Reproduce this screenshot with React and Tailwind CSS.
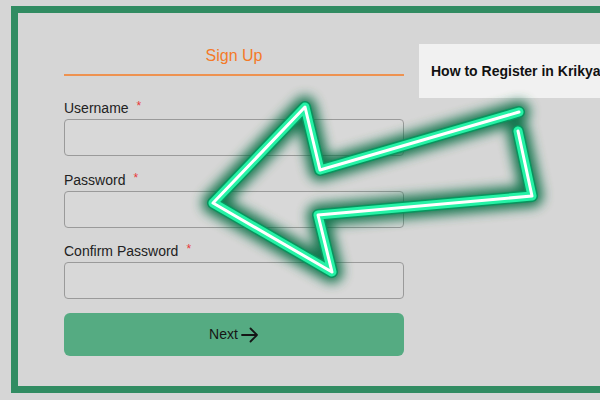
import React from "react";

const arrowPath =
  "M 518 131 L 532 196 L 318 215 L 332 272 L 213 203 L 305 107 L 320 170 L 519 112";

function Field({ label, className = "" }) {
  return (
    <div className={className}>
      <div className="flex items-center h-4 leading-4 text-[14px] text-[#222]">
        <span>{label}</span>
        <span className="ml-[8px] text-[#e8383a] text-[12px] relative -top-[2px]">*</span>
      </div>
      <div className="mt-[3px] h-[37px] rounded-[4px] border border-[#9a9a9a] bg-[#d8d8d8]" />
    </div>
  );
}

export default function App() {
  return (
    <div
      className="relative w-[600px] h-[400px] overflow-hidden bg-[#d6d6d6]"
      style={{ fontFamily: '"Liberation Sans", Arial, sans-serif' }}
    >
      <div className="ml-[11px] mt-[6px] w-[640px] h-[387px] border-[7px] border-[#318c62] flex">
        <div className="ml-[46px] w-[340px] shrink-0 pt-[33px]">
          <div className="text-center text-[16px] leading-[20px] text-[#f47a28] pb-[8px] border-b-2 border-[#ee9250]">
            Sign Up
          </div>
          <Field label="Username" className="mt-[24px]" />
          <Field label="Password" className="mt-[16px]" />
          <Field label="Confirm Password" className="mt-[15px]" />
          <div className="mt-[14px] h-[43px] rounded-[6px] bg-[#55ab82] flex items-center justify-center text-[14px] text-[#151515]">
            <span>Next</span>
            <svg width="18" height="16" viewBox="0 0 18 16" className="ml-[3px]">
              <path d="M1 8 H16 M9.5 1.5 L16 8 L9.5 14.5" fill="none" stroke="#151515" strokeWidth="1.8" strokeLinecap="round" strokeLinejoin="round" />
            </svg>
          </div>
        </div>
        <div className="ml-[15px] mt-[31px] h-[54px] flex-1 min-w-0 bg-[#f1f1f1] flex items-center pl-[12px] text-[14px] font-bold text-[#111] whitespace-nowrap">
          How to Register in Krikya
        </div>
      </div>
      <svg className="absolute left-0 top-0" width="600" height="400" viewBox="0 0 600 400">
        <defs>
          <filter id="glow" x="-20%" y="-20%" width="140%" height="140%">
            <feGaussianBlur stdDeviation="6" />
          </filter>
        </defs>
        <path d={arrowPath} fill="none" stroke="#066c40" strokeWidth="22" strokeLinecap="round" strokeLinejoin="round" filter="url(#glow)" opacity="0.9" />
        <path d={arrowPath} fill="none" stroke="#08955e" strokeWidth="12" strokeLinecap="round" strokeLinejoin="round" />
        <path d={arrowPath} fill="none" stroke="#26f2a6" strokeWidth="9" strokeLinecap="round" strokeLinejoin="round" />
        <path d={arrowPath} fill="none" stroke="#ffffff" strokeWidth="3" strokeLinecap="round" strokeLinejoin="round" />
      </svg>
    </div>
  );
}
